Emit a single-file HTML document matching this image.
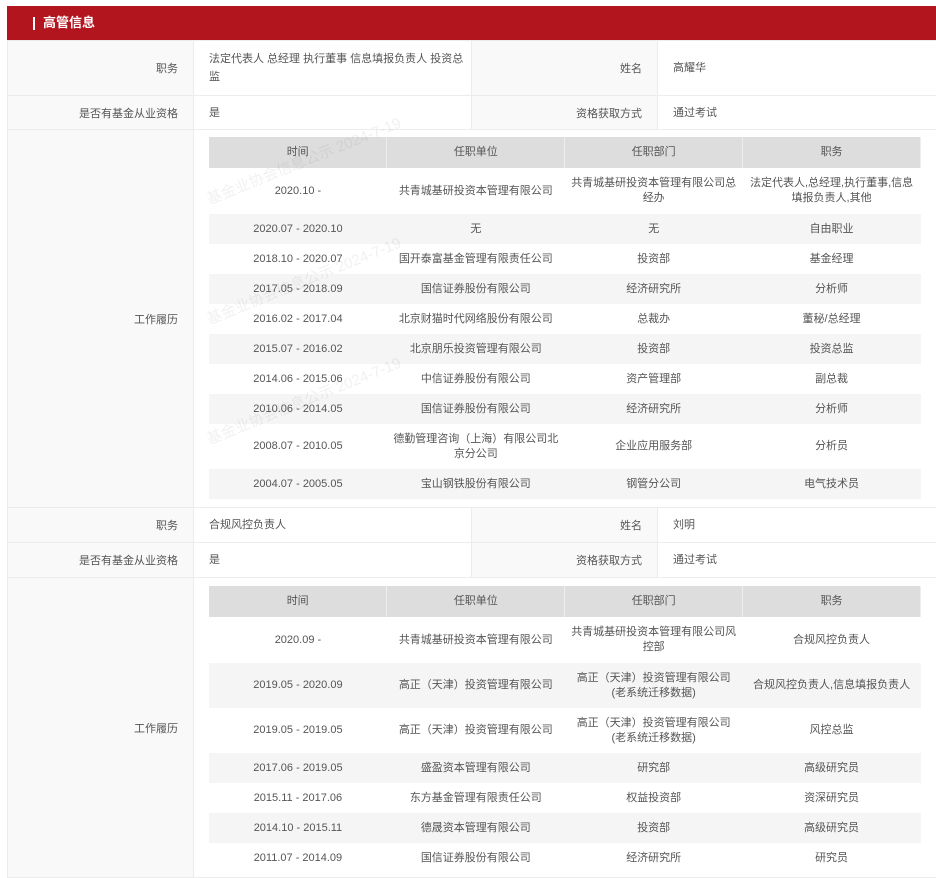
<!DOCTYPE html>
<html><head><meta charset="utf-8"><style>
*{margin:0;padding:0;box-sizing:border-box}
body{width:936px;height:870px;overflow:hidden;background:#fff;font-family:"Liberation Sans","Noto Sans CJK SC",sans-serif;font-size:11px;color:#555;position:relative}
.hd{position:absolute;left:7px;top:6px;width:929px;height:34px;background:#b3151f;color:#fff;font-weight:bold;font-size:13px;line-height:34px;padding-left:26px}
.hd:before{content:"";position:absolute;left:26px;top:11px;width:2px;height:13px;background:#fff}
.hd span{padding-left:10px}
table.o{position:absolute;left:7px;width:929px;border-collapse:collapse;table-layout:fixed}
table.o td{border:1px solid #ececec;vertical-align:middle}
td.l{background:#f9f9f9;text-align:right;padding-right:15px}
td.v{padding-left:15px;padding-right:4px;line-height:18px}
table.i{width:712px;border-collapse:collapse;table-layout:fixed;text-align:center}
table.i td,table.i th{border:none;line-height:15px;padding:0 6px}
table.i th{background:#ddd;font-weight:normal;height:31px;border-right:1px solid #eee}
table.i tr:nth-child(odd) td{background:#f5f5f5}
.wm{position:absolute;color:rgba(0,0,0,0.06);font-size:15px;transform:rotate(-22deg);white-space:nowrap}
</style></head><body>
<div class="hd"><span>高管信息</span></div>

<table class="o" style="top:40px">
<colgroup><col style="width:186px"><col style="width:278px"><col style="width:186px"><col style="width:279px"></colgroup>
<tr style="height:55px"><td class="l">职务</td><td class="v" style="white-space:nowrap">法定代表人 总经理 执行董事 信息填报负责人 投资总<br>监</td><td class="l">姓名</td><td class="v">高耀华</td></tr>
<tr style="height:34px"><td class="l">是否有基金从业资格</td><td class="v">是</td><td class="l">资格获取方式</td><td class="v">通过考试</td></tr>
<tr style="height:378px"><td class="l">工作履历</td><td colspan="3" style="padding:7px 15px 8px">
<table class="i">
<tr><th>时间</th><th>任职单位</th><th>任职部门</th><th>职务</th></tr>
<tr style="height:46px"><td>2020.10 -</td><td>共青城基研投资本管理有限公司</td><td>共青城基研投资本管理有限公司总经办</td><td>法定代表人,总经理,执行董事,信息填报负责人,其他</td></tr>
<tr style="height:30px"><td>2020.07 - 2020.10</td><td>无</td><td>无</td><td>自由职业</td></tr>
<tr style="height:30px"><td>2018.10 - 2020.07</td><td>国开泰富基金管理有限责任公司</td><td>投资部</td><td>基金经理</td></tr>
<tr style="height:30px"><td>2017.05 - 2018.09</td><td>国信证券股份有限公司</td><td>经济研究所</td><td>分析师</td></tr>
<tr style="height:30px"><td>2016.02 - 2017.04</td><td>北京财猫时代网络股份有限公司</td><td>总裁办</td><td>董秘/总经理</td></tr>
<tr style="height:30px"><td>2015.07 - 2016.02</td><td>北京朋乐投资管理有限公司</td><td>投资部</td><td>投资总监</td></tr>
<tr style="height:30px"><td>2014.06 - 2015.06</td><td>中信证券股份有限公司</td><td>资产管理部</td><td>副总裁</td></tr>
<tr style="height:30px"><td>2010.06 - 2014.05</td><td>国信证券股份有限公司</td><td>经济研究所</td><td>分析师</td></tr>
<tr style="height:45px"><td>2008.07 - 2010.05</td><td>德勤管理咨询（上海）有限公司北京分公司</td><td>企业应用服务部</td><td>分析员</td></tr>
<tr style="height:30px"><td>2004.07 - 2005.05</td><td>宝山钢铁股份有限公司</td><td>钢管分公司</td><td>电气技术员</td></tr>
</table></td></tr>
<tr style="height:35px"><td class="l">职务</td><td class="v">合规风控负责人</td><td class="l">姓名</td><td class="v">刘明</td></tr>
<tr style="height:35px"><td class="l">是否有基金从业资格</td><td class="v">是</td><td class="l">资格获取方式</td><td class="v">通过考试</td></tr>
<tr style="height:300px"><td class="l">工作履历</td><td colspan="3" style="padding:8px 15px 0;vertical-align:top">
<table class="i">
<tr><th>时间</th><th>任职单位</th><th>任职部门</th><th>职务</th></tr>
<tr style="height:46px"><td>2020.09 -</td><td>共青城基研投资本管理有限公司</td><td>共青城基研投资本管理有限公司风控部</td><td>合规风控负责人</td></tr>
<tr style="height:45px"><td>2019.05 - 2020.09</td><td>高正（天津）投资管理有限公司</td><td>高正（天津）投资管理有限公司(老系统迁移数据)</td><td>合规风控负责人,信息填报负责人</td></tr>
<tr style="height:45px"><td>2019.05 - 2019.05</td><td>高正（天津）投资管理有限公司</td><td>高正（天津）投资管理有限公司(老系统迁移数据)</td><td>风控总监</td></tr>
<tr style="height:30px"><td>2017.06 - 2019.05</td><td>盛盈资本管理有限公司</td><td>研究部</td><td>高级研究员</td></tr>
<tr style="height:30px"><td>2015.11 - 2017.06</td><td>东方基金管理有限责任公司</td><td>权益投资部</td><td>资深研究员</td></tr>
<tr style="height:30px"><td>2014.10 - 2015.11</td><td>德晟资本管理有限公司</td><td>投资部</td><td>高级研究员</td></tr>
<tr style="height:30px"><td>2011.07 - 2014.09</td><td>国信证券股份有限公司</td><td>经济研究所</td><td>研究员</td></tr>
</table></td></tr>
</table>
<div class="wm" style="left:200px;top:150px">基金业协会信息公示 2024-7-19</div>
<div class="wm" style="left:200px;top:270px">基金业协会信息公示 2024-7-19</div>
<div class="wm" style="left:200px;top:390px">基金业协会信息公示 2024-7-19</div>
</body></html>
